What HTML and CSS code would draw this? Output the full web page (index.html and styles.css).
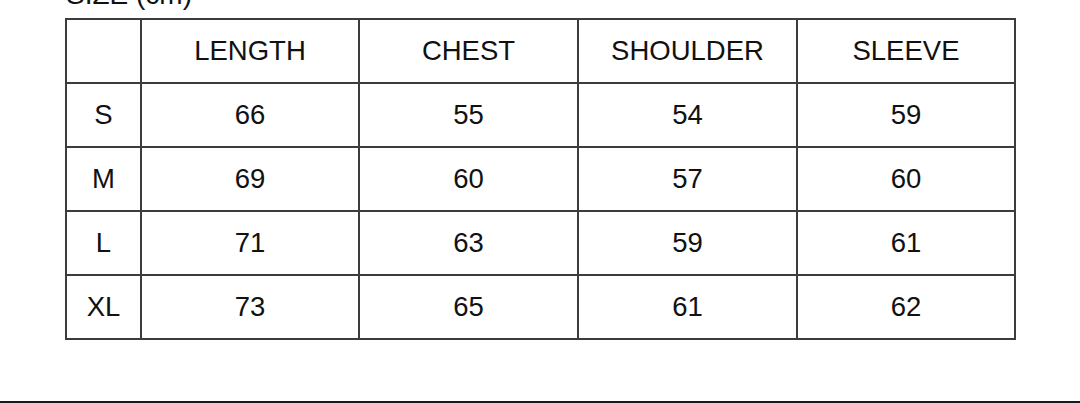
FILE: index.html
```html
<!DOCTYPE html>
<html>
<head>
<meta charset="utf-8">
<link rel="stylesheet" href="styles.css">
</head>
<body>
<div class="page">
  <div class="title">SIZE (cm)</div>
  <table class="sizes">
    <colgroup>
      <col class="c0"><col class="c1"><col class="c2"><col class="c2"><col class="c1">
    </colgroup>
    <tr><td></td><td>LENGTH</td><td>CHEST</td><td>SHOULDER</td><td>SLEEVE</td></tr>
    <tr><td>S</td><td>66</td><td>55</td><td>54</td><td>59</td></tr>
    <tr><td>M</td><td>69</td><td>60</td><td>57</td><td>60</td></tr>
    <tr><td>L</td><td>71</td><td>63</td><td>59</td><td>61</td></tr>
    <tr><td>XL</td><td>73</td><td>65</td><td>61</td><td>62</td></tr>
  </table>
  <div class="rule"></div>
</div>
</body>
</html>
```
FILE: styles.css
```css
html, body {
  margin: 0;
  padding: 0;
  background: #fff;
}
.page {
  width: 1080px;
  height: 403px;
  position: relative;
  overflow: hidden;
  font-family: "Liberation Sans", Arial, sans-serif;
  color: #111;
}
.title {
  font-size: 28px;
  line-height: 28px;
  margin: -19px 0 0 66px;
  height: 28px;
}
.sizes {
  margin: 9px 0 0 65px;
  border-collapse: collapse;
  table-layout: fixed;
  width: 949px;
}
.c0 { width: 75px; }
.c1 { width: 218px; }
.c2 { width: 219px; }
.sizes td {
  border: 2px solid #3c3c3c;
  height: 62px;
  padding: 0;
  text-align: center;
  vertical-align: middle;
  font-size: 27.5px;
  line-height: 28px;
}
.rule {
  position: absolute;
  left: 0;
  right: 0;
  bottom: 0;
  height: 2px;
  background: #1a1a1a;
}
```
